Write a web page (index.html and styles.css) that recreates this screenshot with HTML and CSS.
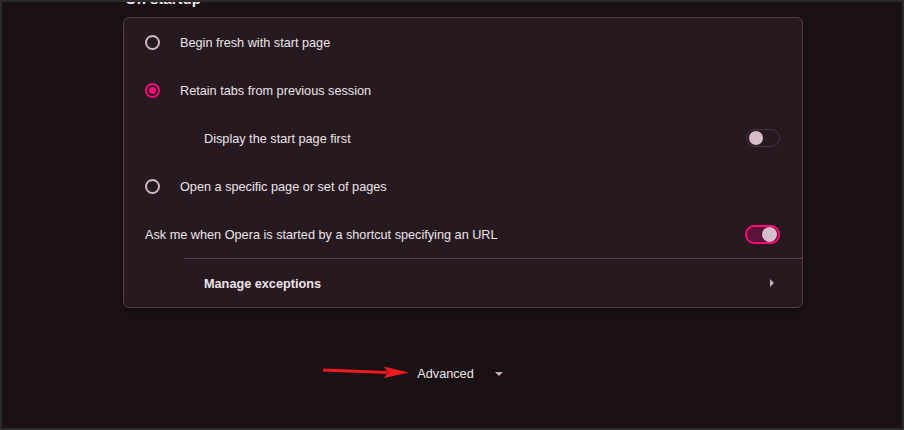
FILE: index.html
```html
<!DOCTYPE html>
<html lang="en">
  <head>
    <meta charset="UTF-8" />
    <meta name="viewport" content="width=device-width, initial-scale=1.0" />
    <title>Settings - On startup</title>
    <link rel="stylesheet" href="styles.css">
  </head>
  <body>
    <div class="frame">
      <div class="section">
        <h2 class="section-title">On startup</h2>
        <div class="card">
          <div class="row">
            <span class="radio"></span>
            <span class="label">Begin fresh with start page</span>
          </div>
          <div class="row">
            <span class="radio checked"></span>
            <span class="label">Retain tabs from previous session</span>
          </div>
          <div class="row sub">
            <span class="label">Display the start page first</span>
            <span class="toggle"><span class="knob"></span></span>
          </div>
          <div class="row">
            <span class="radio"></span>
            <span class="label">Open a specific page or set of pages</span>
          </div>
          <div class="row plain">
            <span class="label">Ask me when Opera is started by a shortcut specifying an URL</span>
            <span class="toggle on"><span class="knob"></span></span>
          </div>
          <div class="row link">
            <span class="label">Manage exceptions</span>
            <span class="caret-right"></span>
          </div>
        </div>
        <div class="advanced">
          <svg class="annotation" width="90" height="14" viewBox="0 0 90 14">
            <path d="M0 3.6 L64 6 L64 9 L0 6.4 Z" fill="#ec1a22" />
            <path d="M61 1.5 L86 7.5 L61 13 L65 7.5 Z" fill="#ec1a22" />
          </svg>
          <span class="advanced-label">Advanced</span>
          <span class="caret-down"></span>
        </div>
      </div>
    </div>
  </body>
</html>
```

FILE: styles.css
```css
html, body {
  margin: 0;
  height: 100%;
}
body {
  font-family: "Liberation Sans", Arial, sans-serif;
  font-size: 12.7px;
  color: #ece4e8;
  background: #2b2a2a;
  overflow: hidden;
}
.frame {
  margin: 2px;
  height: 426px;
  background: #1a1114;
  overflow: hidden;
}
.section {
  width: 680px;
  margin-left: 121px;
}
.section-title {
  margin: -12px 0 0 2px;
  height: 27px;
  font-size: 15px;
  font-weight: bold;
  color: #f2eaee;
}
.card {
  background: #261a20;
  border: 1px solid #5a3a4b;
  border-radius: 6px;
  box-shadow: 0 3px 6px rgba(0, 0, 0, 0.35);
}
.row {
  display: flex;
  align-items: center;
  height: 48px;
  padding: 0 22px 0 21px;
}
.row .label {
  flex: 1;
  padding-top: 2px;
}
.radio {
  width: 11px;
  height: 11px;
  border: 2px solid #d2b5c4;
  border-radius: 50%;
  margin-right: 20px;
  box-sizing: content-box;
  position: relative;
}
.radio.checked {
  border-color: #ff0a78;
}
.radio.checked::after {
  content: "";
  position: absolute;
  left: 2px;
  top: 2px;
  width: 7px;
  height: 7px;
  border-radius: 50%;
  background: #ff0a78;
}
.row.sub {
  padding-left: 80px;
}
.row.plain {
  padding-left: 21px;
}
.row.link {
  margin-left: 60px;
  padding-left: 20px;
  padding-right: 28px;
  border-top: 1px solid #5a3a4b;
  font-weight: bold;
}
.toggle {
  width: 32px;
  height: 16px;
  border: 1px solid #4b3241;
  border-radius: 9px;
  position: relative;
  background: #261a20;
}
.toggle .knob {
  position: absolute;
  left: 2px;
  top: 1px;
  width: 14px;
  height: 14px;
  border-radius: 50%;
  background: #d8bccb;
}
.toggle.on {
  width: 31px;
  height: 15px;
  border: 2px solid #ff0a78;
  background: #5c1136;
}
.toggle.on .knob {
  left: auto;
  right: 1px;
  top: 0;
  width: 15px;
  height: 15px;
}
.caret-right {
  width: 0;
  height: 0;
  border-top: 4px solid transparent;
  border-bottom: 4px solid transparent;
  border-left: 4px solid #c9aabb;
}
.advanced {
  position: relative;
  display: flex;
  align-items: center;
  justify-content: center;
  gap: 21px;
  margin-top: 57px;
  padding-right: 6px;
  color: #ece4e8;
}
.advanced-label {
  padding-top: 2px;
}
.caret-down {
  width: 0;
  height: 0;
  border-left: 4px solid transparent;
  border-right: 4px solid transparent;
  border-top: 4px solid #c9aabb;
  margin-top: 1px;
}
.annotation {
  position: absolute;
  left: 200px;
  top: 0;
}
```
